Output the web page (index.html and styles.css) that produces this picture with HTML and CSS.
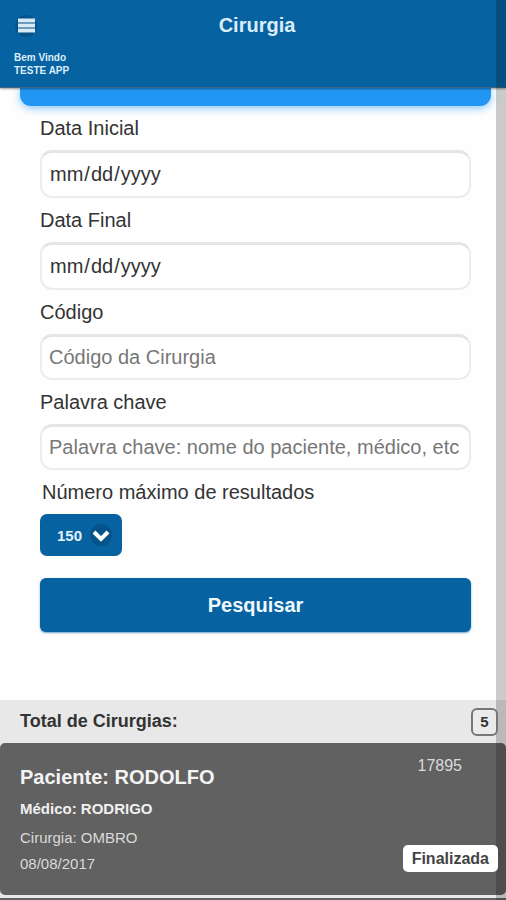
FILE: index.html
```html
<!DOCTYPE html>
<html lang="pt-BR">
<head>
<meta charset="utf-8">
<meta name="viewport" content="width=device-width, initial-scale=1">
<title>Cirurgia</title>
<link rel="stylesheet" href="styles.css">
</head>
<body>
<header class="header">
  <div class="header-row">
    <button class="menu" type="button" aria-label="Menu">
      <svg viewBox="0 0 24 24" width="24" height="24" aria-hidden="true">
        <circle class="disc" cx="12" cy="12" r="11"/>
        <path d="M4 6.500h17M4 11.500h17M4 16.500h17" fill="none" stroke="currentColor" stroke-width="4"/>
      </svg>
    </button>
    <h1 class="title">Cirurgia</h1>
  </div>
  <p class="welcome">Bem Vindo<br>TESTE APP</p>
</header>
<main class="main">
  <div class="panel-edge"></div>
  <form class="form">
    <label for="inicio">Data Inicial</label>
    <input class="date" id="inicio" type="date" lang="en-US">
    <label for="fim">Data Final</label>
    <input class="date" id="fim" type="date" lang="en-US">
    <label for="codigo">Código</label>
    <input id="codigo" type="text" placeholder="Código da Cirurgia">
    <label for="palavra">Palavra chave</label>
    <input id="palavra" type="text" placeholder="Palavra chave: nome do paciente, médico, etc">
    <label class="limit-label" for="limite">Número máximo de resultados</label>
    <div class="select-wrap">
      <select id="limite"><option>150</option></select>
      <svg class="arrow" viewBox="0 0 24 24" width="24" height="24" aria-hidden="true">
        <circle class="disc" cx="12" cy="12" r="11"/>
        <path d="M5 9l7 7 7-7" fill="none" stroke="currentColor" stroke-width="4"/>
      </svg>
    </div>
    <button class="submit" type="button">Pesquisar</button>
  </form>
  <section class="results">
    <div class="total">
      <h2>Total de Cirurgias:</h2>
      <span class="count">5</span>
    </div>
    <article class="card">
      <div class="info">
        <h3>Paciente: RODOLFO</h3>
        <p class="doctor">Médico: RODRIGO</p>
        <p>Cirurgia: OMBRO</p>
        <p>08/08/2017</p>
      </div>
      <span class="number">17895</span>
      <span class="status">Finalizada</span>
    </article>
    <div class="card-peek"></div>
  </section>
</main>
<div class="scroll-track"></div>
</body>
</html>
```
FILE: styles.css
```css
* {
  box-sizing: border-box;
}

body {
  --blue: #0662a1;
  margin: 0;
  min-height: 100vh;
  display: flex;
  flex-direction: column;
  background: #fefefe;
  color: #333;
  font: 20px "Liberation Sans", Arial, sans-serif;
}

h1, h2, h3, p {
  margin: 0;
}

.header {
  position: relative;
  z-index: 1;
  height: 88px;
  background: var(--blue);
  border-bottom: 1px solid #3d6482;
  box-shadow: 0 1px 2px rgba(0, 0, 0, .4);
  color: #dcedfa;
}

.header-row {
  display: grid;
  grid-template-columns: 44px 1fr 36px;
  align-items: center;
  height: 51px;
}

.menu {
  display: flex;
  margin-left: 14px;
  padding: 0;
  border: 0;
  background: none;
  color: #d8eaf6;
}

.disc {
  fill: rgba(0, 0, 0, .15);
}

.title {
  font-size: 20px;
  text-align: center;
}

.welcome {
  padding-left: 14px;
  font-size: 10px;
  font-weight: bold;
  line-height: 13px;
}

.main {
  flex: 1;
  display: flex;
  flex-direction: column;
}

.panel-edge {
  height: 18px;
  margin: 0 15px 0 20px;
  border-radius: 0 0 11px 11px;
  background: #2196f3;
  box-shadow: 0 2px 8px rgba(33, 150, 243, .55);
}

.form {
  display: flex;
  flex-direction: column;
  padding: 0 35px 68px 40px;
}

label {
  line-height: 44px;
}

.limit-label {
  padding-left: 2px;
}

input {
  width: 100%;
  height: 46px;
  padding: 0 7px;
  border: 2px solid #ececec;
  border-top: 3px solid #e5e5e5;
  border-radius: 12px;
  background: #fff;
  color: #333;
  font: inherit;
}

.date {
  height: 48px;
}

.date::-webkit-calendar-picker-indicator {
  display: none;
}

input::placeholder {
  color: #777;
  opacity: 1;
}

.select-wrap {
  position: relative;
  align-self: flex-start;
  color: #fff;
}

select {
  display: block;
  width: 82px;
  height: 42px;
  padding: 0 0 0 17px;
  border: 0;
  border-radius: 7px;
  appearance: none;
  background: var(--blue);
  color: #e4f2fc;
  font: bold 15px "Liberation Sans", Arial, sans-serif;
}

.arrow {
  position: absolute;
  top: 9px;
  right: 9px;
  pointer-events: none;
}

.submit {
  height: 54px;
  margin-top: 22px;
  border: 0;
  border-radius: 6px;
  background: var(--blue);
  box-shadow: 0 1px 2px rgba(6, 98, 161, .6);
  color: #f0f8fe;
  font: bold 20px "Liberation Sans", Arial, sans-serif;
}

.results {
  flex: 1;
  display: flex;
  flex-direction: column;
  background: #e8e8e8;
}

.total {
  display: flex;
  align-items: center;
  justify-content: space-between;
  height: 43px;
  padding: 0 8px 0 20px;
}

.total h2 {
  font-size: 18px;
}

.count {
  position: relative;
  z-index: 3;
  width: 27px;
  border: 2px solid #777;
  border-radius: 6px;
  background: #ebebeb;
  font-size: 15px;
  font-weight: bold;
  line-height: 24px;
  text-align: center;
}

.card {
  position: relative;
  display: flex;
  justify-content: space-between;
  padding: 18px 44px 18px 20px;
  border-radius: 5px;
  background: #616161;
  color: #dadada;
  font-size: 15px;
  line-height: 26px;
}

.card h3 {
  color: #f4f4f4;
  font-size: 20px;
  line-height: 32px;
}

.doctor {
  color: #f0f0f0;
  font-weight: bold;
  line-height: 32px;
}

.number {
  font-size: 16px;
  line-height: 10px;
}

.status {
  position: absolute;
  z-index: 3;
  right: 8px;
  bottom: 23px;
  padding: 0 9px;
  border-radius: 5px;
  background: #fff;
  color: #444;
  font-size: 16px;
  font-weight: bold;
  line-height: 27px;
}

.card-peek {
  flex: 1;
  margin-top: 3px;
  background: #616161;
}

.scroll-track {
  position: fixed;
  z-index: 2;
  top: 0;
  right: 0;
  bottom: 0;
  width: 10px;
  background: rgba(0, 0, 0, .2);
  pointer-events: none;
}
```
